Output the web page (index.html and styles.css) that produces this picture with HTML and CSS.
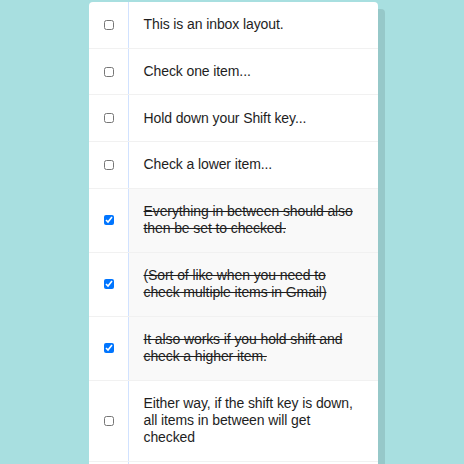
FILE: index.html
```html
<!DOCTYPE html>
<html>
<head>
<meta charset="utf-8">
<link rel="stylesheet" href="styles.css">
</head>
<body>
<div class="inbox">
  <div class="item"><input type="checkbox"><p>This is an inbox layout.</p></div>
  <div class="item"><input type="checkbox"><p>Check one item...</p></div>
  <div class="item"><input type="checkbox"><p>Hold down your Shift key...</p></div>
  <div class="item"><input type="checkbox"><p>Check a lower item...</p></div>
  <div class="item"><input type="checkbox" checked><p>Everything in between should also then be set to checked.</p></div>
  <div class="item"><input type="checkbox" checked><p>(Sort of like when you need to check multiple items in Gmail)</p></div>
  <div class="item"><input type="checkbox" checked><p>It also works if you hold shift and check a higher item.</p></div>
  <div class="item"><input type="checkbox"><p>Either way, if the shift key is down, all items in between will get checked</p></div>
  <div class="item"><input type="checkbox"><p class="empty"></p></div>
</div>
</body>
</html>
```

FILE: styles.css
```css
html {
  background: #a8dfe0;
}
body {
  margin: 0;
  height: 464px;
  overflow: hidden;
  font-family: "Liberation Sans", Arial, sans-serif;
}
.inbox {
  width: 289px;
  margin: 2px 0 0 89px;
  background: #fff;
  border-radius: 4px;
  box-shadow: 7px 7px 0 rgba(0, 0, 0, 0.1);
}
.item {
  display: flex;
  align-items: center;
  border-bottom: 1px solid #f1f1f1;
}
.item:last-child {
  border-bottom: 0;
}
.item input {
  width: 10px;
  height: 10px;
  margin: 14.5px;
  flex: none;
}
.item p {
  flex: 1;
  margin: 0;
  padding: 14.25px 14.5px;
  font-size: 14px;
  letter-spacing: -0.1px;
  line-height: 17.2px;
  color: #1e1e1e;
  border-left: 1px solid #d1e2ff;
}
.item p.empty {
  height: 17.2px;
}
.item input:checked + p {
  background: #f9f9f9;
  text-decoration: line-through;
}
```
